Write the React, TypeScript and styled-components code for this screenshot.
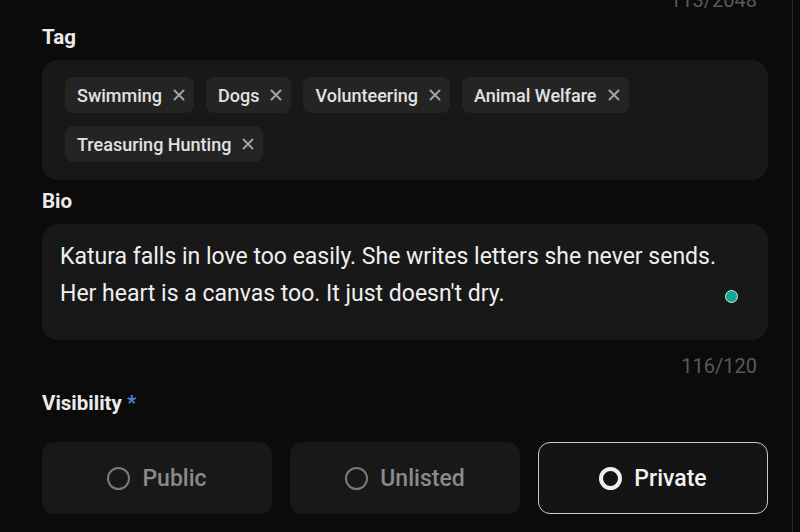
import React from "react";
import styled, { createGlobalStyle, css } from "styled-components";

const GlobalStyle = createGlobalStyle`
  html, body {
    margin: 0;
    padding: 0;
    background: #0b0b0b;
    font-family: Roboto, "Noto Sans", sans-serif;
    -webkit-font-smoothing: antialiased;
  }
`;

const tags = [
  "Swimming",
  "Dogs",
  "Volunteering",
  "Animal Welfare",
  "Treasuring Hunting",
];

type Visibility = "public" | "unlisted" | "private";

const options: { value: Visibility; label: string }[] = [
  { value: "public", label: "Public" },
  { value: "unlisted", label: "Unlisted" },
  { value: "private", label: "Private" },
];

const CloseIcon = () => (
  <svg width="12" height="12" viewBox="0 0 12 12" aria-hidden>
    <path
      d="M1.5 1.5 L10.5 10.5 M10.5 1.5 L1.5 10.5"
      stroke="currentColor"
      strokeWidth="2"
      strokeLinecap="round"
    />
  </svg>
);

export default function App() {
  const selected: Visibility = "private";

  return (
    <>
      <GlobalStyle />
      <Page>
        <Counter $top>113/2048</Counter>

        <Field>
          <Label>Tag</Label>
          <TagBox>
            {tags.map((tag) => (
              <Chip key={tag}>
                {tag}
                <ChipRemove type="button" aria-label={`Remove ${tag}`}>
                  <CloseIcon />
                </ChipRemove>
              </Chip>
            ))}
          </TagBox>
        </Field>

        <Field>
          <Label>Bio</Label>
          <BioWrap>
            <BioText
              readOnly
              value={
                "Katura falls in love too easily. She writes letters she never sends. Her heart is a canvas too. It just doesn't dry."
              }
            />
            <StatusDot />
          </BioWrap>
          <Counter>116/120</Counter>
        </Field>

        <Field>
          <Label>
            Visibility <Required>*</Required>
          </Label>
          <Options>
            {options.map((o) => (
              <Option key={o.value} $active={o.value === selected}>
                <Radio $active={o.value === selected} />
                {o.label}
              </Option>
            ))}
          </Options>
        </Field>
      </Page>
    </>
  );
}

const Page = styled.div`
  box-sizing: border-box;
  width: 793px;
  height: 532px;
  overflow: hidden;
  padding: 0 24px 0 42px;
  border-right: 1px solid #2a2a2a;
  display: flex;
  flex-direction: column;
`;

const Field = styled.div`
  display: flex;
  flex-direction: column;
`;

const Label = styled.div`
  color: #ececec;
  font-size: 20.5px;
  font-weight: 700;
  line-height: 24px;
  margin-bottom: 11px;
`;

const Required = styled.span`
  color: #4d82d6;
`;

const Counter = styled.div<{ $top?: boolean }>`
  align-self: flex-end;
  padding-right: 11px;
  color: #595959;
  font-size: 20px;
  line-height: 24px;
  ${({ $top }) =>
    $top
      ? css`
          margin: -12px 0 13px;
        `
      : css`
          margin: 14px 0 13px;
        `}
`;

const TagBox = styled.div`
  display: flex;
  flex-wrap: wrap;
  gap: 13px 12px;
  padding: 17px 23px 18px;
  border-radius: 16px;
  background: #181818;
  margin-bottom: 9px;
`;

const Chip = styled.div`
  display: inline-flex;
  align-items: center;
  height: 36px;
  padding: 0 9px 0 12px;
  border-radius: 8px;
  background: #242424;
  color: #e2e2e2;
  font-size: 18px;
  font-weight: 500;
`;

const ChipRemove = styled.button`
  display: inline-flex;
  margin-left: 11px;
  padding: 0;
  border: 0;
  background: none;
  color: #a3a3a3;
  cursor: pointer;
`;

const BioWrap = styled.div`
  position: relative;
`;

const BioText = styled.textarea`
  display: block;
  box-sizing: border-box;
  width: 100%;
  height: 116px;
  padding: 14px 18px;
  border: 0;
  border-radius: 16px;
  background: #181818;
  color: #efefef;
  font-family: Roboto, "Noto Sans", sans-serif;
  font-size: 23px;
  line-height: 37px;
  resize: none;
  overflow: hidden;
  outline: none;
`;

const StatusDot = styled.span`
  position: absolute;
  right: 30px;
  top: 66px;
  width: 11px;
  height: 11px;
  border-radius: 50%;
  background: #15a593;
  border: 1.5px solid #cfe9e5;
`;

const Options = styled.div`
  display: grid;
  grid-template-columns: repeat(3, 1fr);
  gap: 18px;
  margin-top: 16px;
`;

const Option = styled.button<{ $active: boolean }>`
  display: flex;
  align-items: center;
  justify-content: center;
  gap: 12px;
  height: 72px;
  box-sizing: border-box;
  border-radius: 12px;
  font-family: Roboto, "Noto Sans", sans-serif;
  font-size: 23px;
  font-weight: 500;
  cursor: pointer;
  ${({ $active }) =>
    $active
      ? css`
          background: #141414;
          border: 1.5px solid #c9c9c9;
          color: #f2f2f2;
        `
      : css`
          background: #181818;
          border: 1.5px solid transparent;
          color: #8a8a8a;
        `}
`;

const Radio = styled.span<{ $active: boolean }>`
  box-sizing: border-box;
  width: 23px;
  height: 23px;
  border-radius: 50%;
  ${({ $active }) =>
    $active
      ? css`
          border: 4.5px solid #eeeeee;
        `
      : css`
          border: 2px solid #7a7a7a;
        `}
`;
